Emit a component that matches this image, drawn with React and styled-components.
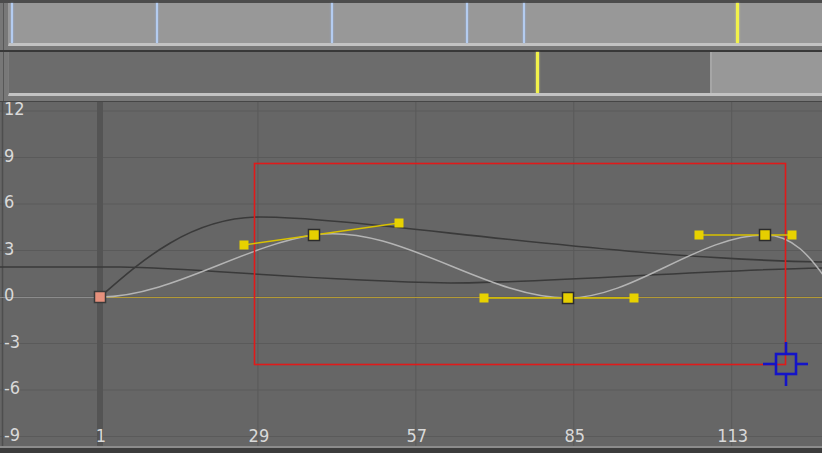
import React from 'react'
import styled, { createGlobalStyle } from 'styled-components'

const GlobalStyle = createGlobalStyle`
  html, body {
    margin: 0;
    padding: 0;
    background: #5e5e5e;
  }
`

const Page = styled.div`
  width: 822px;
  height: 453px;
  overflow: hidden;
  display: flex;
  flex-direction: column;
  background: #6a6a6a;
  font-family: "DejaVu Sans Condensed", "DejaVu Sans", sans-serif;
`

const TrackRow = styled.div`
  display: flex;
  padding-left: 8px;
  padding-bottom: ${p => p.$padBottom}px;
  border-top: ${p => p.$topLine};
  border-bottom: ${p => p.$bottomLine || 'none'};
  background: linear-gradient(to right, #777 0 3px, #575757 3px 4px, #787878 4px);
`

const Track = styled.div`
  position: relative;
  flex: 1;
  display: flex;
  height: ${p => p.$h}px;
  background: ${p => p.$bg};
  border-bottom: 3px solid #c3c3c3;
  border-left: 1px solid ${p => p.$edge};
`

const Segment = styled.div`
  flex: ${p => (p.$w ? `0 0 ${p.$w}px` : '1')};
  background: ${p => p.$bg};
  border-left: ${p => (p.$w ? '2px solid #a6a6a6' : 'none')};
`

const Marker = styled.div`
  position: absolute;
  top: 0;
  bottom: 0;
  left: ${p => p.$x}px;
  width: ${p => p.$w}px;
  background: ${p => p.$color};
  box-shadow: 0 0 2px ${p => p.$glow};
`

const Graph = styled.svg`
  display: block;
  width: 822px;
  height: 344px;
  flex: 0 0 344px;
  background: #666666;
`

const Footer = styled.div`
  flex: 1;
  border-top: 2px solid #8c8c8c;
  background: #3c3c3c;
`

const blueMarks = [2, 147, 322, 457, 514]

const px = f => 100 + (f - 1) * 5.64
const py = v => 297 - v * 15.5

const yTicks = [12, 9, 6, 3, 0, -3, -6, -9]
const xTicks = [1, 29, 57, 85, 113]

const keys = [
  { x: 314, y: 235, h1: [244, 245], h2: [399, 223] },
  { x: 568, y: 298, h1: [484, 298], h2: [634, 298] },
  { x: 765, y: 235, h1: [699, 235], h2: [792, 235] },
]

const Square = ({ x, y, s, fill, stroke }) => (
  <rect
    x={x - s / 2}
    y={y - s / 2}
    width={s}
    height={s}
    fill={fill}
    stroke={stroke || 'none'}
    strokeWidth={stroke ? 1.5 : 0}
  />
)

const CurveGraph = () => (
  <Graph viewBox="0 102 822 344">
    {yTicks.map(v => (
      <line key={v} x1="0" x2="822" y1={py(v)} y2={py(v)} stroke="#5a5a5a" strokeWidth="1" />
    ))}
    {xTicks.slice(1).map(f => (
      <line key={f} x1={px(f)} x2={px(f)} y1="102" y2="446" stroke="#5a5a5a" strokeWidth="1" />
    ))}
    <line x1="2.5" x2="2.5" y1="102" y2="446" stroke="#4e4e4e" strokeWidth="1.5" />
    <line x1="100" x2="100" y1="102" y2="446" stroke="#545454" strokeWidth="6" />

    <line x1="0" x2="100" y1="297.5" y2="297.5" stroke="#8c8c8c" strokeWidth="1" />
    <line x1="100" x2="822" y1="297.5" y2="297.5" stroke="#b39a36" strokeWidth="1" />

    {yTicks.map(v => (
      <text key={v} x="4" y={py(v) + 4} fontSize="18" fill="#d9d9d9">
        {v}
      </text>
    ))}
    {xTicks.map(f => (
      <text key={f} x={px(f) + 1} y="442" fontSize="18" fill="#d9d9d9" textAnchor="middle">
        {f}
      </text>
    ))}

    <path d="M0,267 L120,267 C200,268 300,280 450,283 C550,283 700,270 822,268" fill="none" stroke="#3a3a3a" strokeWidth="1.6" />
    <path d="M100,297 C140,262 190,217 260,217 C360,217 600,258 822,262" fill="none" stroke="#3a3a3a" strokeWidth="1.6" />
    <path
      d="M100,297 C170,297 244,245 314,235 C399,223 484,298 568,298 C634,298 699,235 765,235 C792,235 810,255 830,285"
      fill="none"
      stroke="#b4b4b4"
      strokeWidth="1.5"
    />

    <rect x="254.5" y="163.5" width="531" height="201" fill="none" stroke="#e01a1a" strokeWidth="1.6" />

    {keys.map(k => (
      <g key={k.x}>
        <line x1={k.h1[0]} y1={k.h1[1]} x2={k.h2[0]} y2={k.h2[1]} stroke="#d9c200" strokeWidth="1.5" />
        <Square x={k.h1[0]} y={k.h1[1]} s={9} fill="#e8d200" />
        <Square x={k.h2[0]} y={k.h2[1]} s={9} fill="#e8d200" />
        <Square x={k.x} y={k.y} s={11} fill="#e6cf00" stroke="#2c2c2c" />
      </g>
    ))}
    <Square x={100} y={297} s={11} fill="#e6907c" stroke="#3a3a3a" />

    <g stroke="#1414c8" strokeWidth="2.6" fill="none">
      <rect x="776" y="354" width="20" height="20" />
      <line x1="786" x2="786" y1="342" y2="354" />
      <line x1="786" x2="786" y1="374" y2="386" />
      <line x1="763" x2="776" y1="364" y2="364" />
      <line x1="796" x2="808" y1="364" y2="364" />
    </g>
  </Graph>
)

export default function App() {
  return (
    <>
      <GlobalStyle />
      <Page>
        <TrackRow $topLine="3px solid #4c4c4c" $padBottom={4}>
          <Track $h={40} $bg="#989898" $edge="#9a9a9a">
            {blueMarks.map(x => (
              <Marker key={x} $x={x} $w={2} $color="#b4ccf0" $glow="#9ab4e0" />
            ))}
            <Marker $x={727} $w={3} $color="#f2f24a" $glow="#e0e080" />
          </Track>
        </TrackRow>
        <TrackRow $topLine="2px solid #383838" $padBottom={5} $bottomLine="1px solid #464646">
          <Track $h={41} $bg="#6c6c6c" $edge="#7c7c7c">
            <Segment $bg="#6c6c6c" />
            <Segment $w={110} $bg="#989898" />
            <Marker $x={527} $w={3} $color="#f2f24a" $glow="#e0e080" />
          </Track>
        </TrackRow>
        <CurveGraph />
        <Footer />
      </Page>
    </>
  )
}
